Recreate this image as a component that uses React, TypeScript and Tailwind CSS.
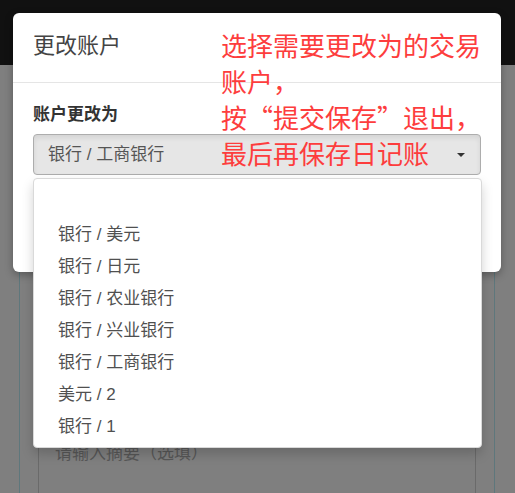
import React from "react";

const options = [
  "",
  "银行 / 美元",
  "银行 / 日元",
  "银行 / 农业银行",
  "银行 / 兴业银行",
  "银行 / 工商银行",
  "美元 / 2",
  "银行 / 1",
];

const notes = ["选择需要更改为的交易", "账户，", "按“提交保存”退出，", "最后再保存日记账"];

const font = "font-['Liberation_Sans','Noto_Sans_CJK_SC',sans-serif]";

export default function App() {
  return (
    <div className={`relative h-[493px] w-full overflow-hidden bg-[#7f7f7f] ${font}`}>
      {/* page behind the backdrop */}
      <div className="h-[65px] bg-[#111]" />
      <div className="ml-[19px] flex h-[428px] w-[476px] flex-col border-x border-[#5e777c]">
        <div className="mx-[18px] mt-[369px] flex-1 border-x border-t border-[#6a6a6a] px-[16px] pt-[7px] text-[17px] leading-6 text-[#575757]">
          请输入摘要（选填）
        </div>
      </div>

      {/* modal */}
      <div className="absolute left-[13px] top-[13px] h-[259px] w-[488px] rounded-[6px] bg-white shadow-[0_3px_9px_rgba(0,0,0,0.3)]">
        <div className="flex h-[70px] items-center border-b border-[#e5e5e5] px-[20px] pb-[4px] text-[22px] text-[#444]">
          更改账户
        </div>
        <div className="px-[20px] pt-[20px]">
          <div className="text-[17px] font-bold leading-6 text-[#333]">账户更改为</div>
          <div className="mt-[7px] flex h-[41px] items-center justify-between rounded-[4px] border border-[#adadad] bg-[#e6e6e6] pl-[14px] pr-[15px] text-[17px] text-[#555] shadow-[inset_0_3px_5px_rgba(0,0,0,0.08)]">
            <span>银行 / 工商银行</span>
            <span className="h-0 w-0 border-x-[4px] border-t-[4px] border-x-transparent border-t-[#333]" />
          </div>
        </div>
      </div>

      {/* open select menu */}
      <ul className="absolute left-[33px] top-[178px] w-[449px] rounded-[4px] border border-[#d9d9d9] bg-white pb-[4px] pt-[8px] shadow-[0_6px_12px_rgba(0,0,0,0.175)]">
        {options.map((o, i) => (
          <li key={i} className="flex h-[32px] items-center pl-[24px] text-[17px] text-[#505050]">
            {o}
          </li>
        ))}
      </ul>

      {/* annotation */}
      <div className="absolute left-[221px] top-[27px] font-['Noto_Sans_CJK_SC',sans-serif] text-[26px] leading-[36px] text-[#fd3d3d]">
        {notes.map((n) => (
          <div key={n} className="whitespace-nowrap">
            {n}
          </div>
        ))}
      </div>
    </div>
  );
}
